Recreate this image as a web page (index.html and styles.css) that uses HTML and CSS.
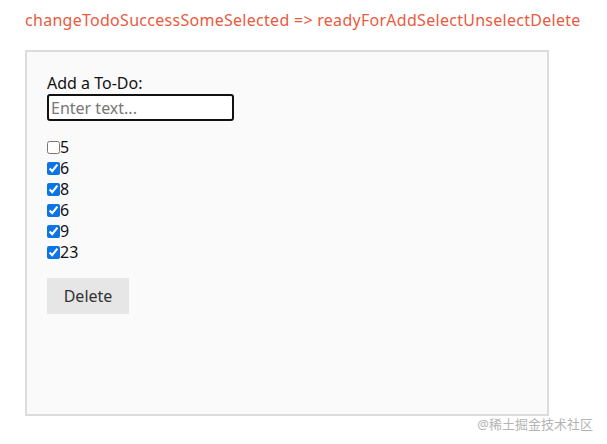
FILE: index.html
```html
<!DOCTYPE html>
<html lang="zh">
<head>
    <meta charset="UTF-8">
    <meta name="viewport" content="width=device-width, initial-scale=1.0">
    <title>To-Do</title>
    <link rel="stylesheet" href="styles.css">
</head>
<body>
    <div class="state">changeTodoSuccessSomeSelected =&gt; readyForAddSelectUnselectDelete</div>

    <div class="todo-box">
        <label class="todo-label" for="todoInput">Add a To-Do:</label>
        <input type="text" id="todoInput" class="todo-input" placeholder="Enter text...">

        <ul class="todo-list">
            <li><input type="checkbox">5</li>
            <li><input type="checkbox" checked>6</li>
            <li><input type="checkbox" checked>8</li>
            <li><input type="checkbox" checked>6</li>
            <li><input type="checkbox" checked>9</li>
            <li><input type="checkbox" checked>23</li>
        </ul>

        <button class="delete-btn">Delete</button>
    </div>

    <div class="watermark">@稀土掘金技术社区</div>
</body>
</html>
```

FILE: styles.css
```css
* {
    margin: 0;
    padding: 0;
    box-sizing: border-box;
}

body {
    font-family: "Segoe UI", "Noto Sans", "Noto Sans CJK SC", sans-serif;
    font-size: 16px;
    color: #222;
    background: #fff;
    padding: 9px 0 0 25px;
    position: relative;
    height: 444px;
}

.state {
    color: #ea5a40;
    font-size: 16px;
    line-height: 22px;
    letter-spacing: 0.28px;
    margin-bottom: 19px;
}

.todo-box {
    width: 524px;
    height: 366px;
    border: 2px solid #dcdcdc;
    background: #fafafa;
    padding: 21px 20px;
}

.todo-label {
    display: block;
    line-height: 21px;
    color: #111;
}

.todo-input {
    display: block;
    width: 187px;
    height: 27px;
    border: 2px solid #111;
    border-radius: 3px;
    padding: 0 2px;
    font: inherit;
    font-size: 16px;
    background: #fff;
}

.todo-input::placeholder {
    color: #777;
}

.todo-list {
    list-style: none;
    margin: 16px 0 15px;
}

.todo-list li {
    display: flex;
    align-items: center;
    line-height: 21px;
    color: #111;
}

.todo-list input {
    width: 13px;
    height: 13px;
    margin: 0;
    accent-color: #0b75e6;
}

.delete-btn {
    width: 82px;
    height: 36px;
    border: none;
    background: #e6e6e6;
    color: #333;
    font: inherit;
    font-size: 16px;
}

.watermark {
    position: absolute;
    right: 14px;
    top: 414px;
    font-size: 13px;
    color: #b4b4b4;
}
```
